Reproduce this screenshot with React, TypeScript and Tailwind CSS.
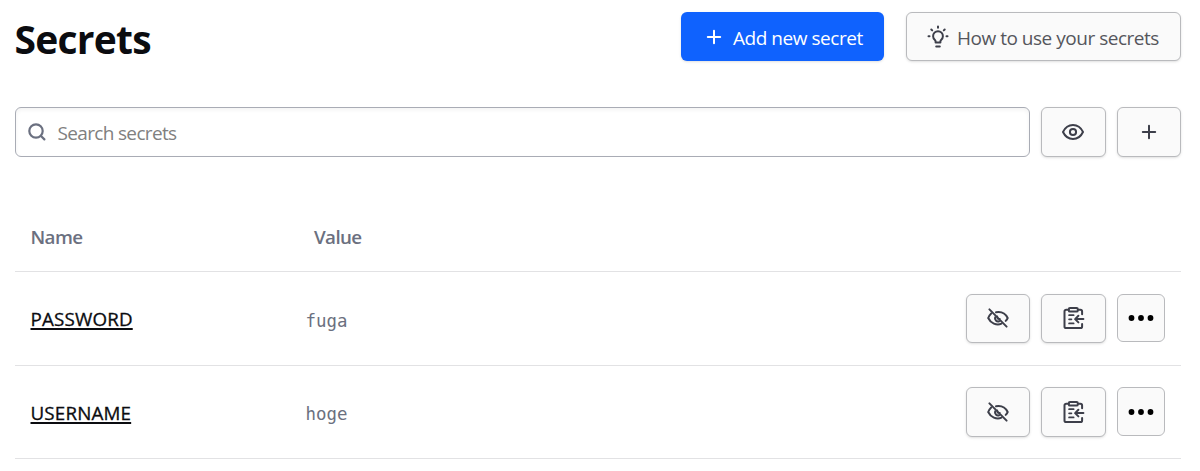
import type { ReactNode } from 'react';
import clsx from 'clsx';

interface Secret {
  name: string;
  value: string;
}

const secrets: Secret[] = [
  { name: 'PASSWORD', value: 'fuga' },
  { name: 'USERNAME', value: 'hoge' },
];

function Icon({ children, className }: { children: ReactNode; className?: string }) {
  return (
    <svg
      viewBox="0 0 24 24"
      fill="none"
      stroke="currentColor"
      strokeWidth="2"
      strokeLinecap="round"
      strokeLinejoin="round"
      className={clsx('h-6 w-6 shrink-0', className)}
    >
      {children}
    </svg>
  );
}

function PlusIcon({ className }: { className?: string }) {
  return (
    <Icon className={className}>
      <path d="M12 5.8v12.4M5.8 12h12.4" />
    </Icon>
  );
}

function SearchIcon() {
  return (
    <Icon className="text-[#6b7080]">
      <circle cx="11" cy="11" r="6.7" strokeWidth="2.2" />
      <path d="m16 16 3.4 3.4" strokeWidth="2.2" />
    </Icon>
  );
}

function BulbIcon() {
  return (
    <Icon>
      <path d="M9.6 17.6v-1.2c0-.7-.4-1.2-.9-1.7a4.9 4.9 0 1 1 6.6 0c-.5.5-.9 1-.9 1.7v1.2z" />
      <path d="M10.2 21.4h3.6M12 1.6v1.2M2.5 11.2h1M20.5 11.2h1M5.3 4.5l.9.9M18.7 4.5l-.9.9" />
    </Icon>
  );
}

function EyeIcon() {
  return (
    <Icon>
      <path d="M2 12c2-4.2 5.7-7 10-7s8 2.8 10 7c-2 4.2-5.7 7-10 7s-8-2.8-10-7z" />
      <circle cx="12" cy="12" r="3.1" />
    </Icon>
  );
}

function EyeOffIcon() {
  return (
    <Icon>
      <path d="m3.4 3.4 17.2 17.2" />
      <path d="M10 6.2c5-.9 9.5 1.3 11.7 5.8-.5 1.1-1.2 2.1-2 2.9" />
      <path d="M5.2 7.4C3.9 8.6 2.9 10.2 2.2 12c2.4 5.2 8.3 7.8 13.3 5.7" />
      <path d="M9.2 11.2a3.1 3.1 0 0 0 4 4" />
      <path d="M11.4 10.2v2.5h2.5" strokeWidth="1.5" />
    </Icon>
  );
}

function ClipboardIcon() {
  return (
    <Icon>
      <path d="M7.6 3.7H5.2a1.7 1.7 0 0 0-1.7 1.7v15a1.7 1.7 0 0 0 1.7 1.7h14.2a1.7 1.7 0 0 0 1.7-1.7v-2.5" />
      <path d="M16.9 3.7h2.5a1.7 1.7 0 0 1 1.7 1.7v2.8" />
      <rect x="7.8" y="2" width="9" height="3.6" rx="1.2" />
      <path d="M8.1 9.2h4.5M8.1 13.3h2.3M8.1 17.4h4.5" strokeWidth="1.8" />
      <path d="M22.4 13.1h-8.1M17.4 9.8l-3.3 3.3 3.3 3.3" />
    </Icon>
  );
}

function DotsIcon() {
  return (
    <svg viewBox="0 0 26 8" fill="currentColor" className="h-2 w-[26px] text-black">
      <circle cx="3.5" cy="4" r="2.9" />
      <circle cx="13" cy="4" r="2.9" />
      <circle cx="22.5" cy="4" r="2.9" />
    </svg>
  );
}

function IconButton({ label, className, children }: { label: string; className?: string; children: ReactNode }) {
  return (
    <button
      type="button"
      aria-label={label}
      className={clsx(
        'flex shrink-0 items-center justify-center rounded-md border border-[#b9babd] bg-[#fafafa] text-[#3d3f4a]',
        className ?? 'h-[49.5px] w-[64.5px] shadow-sm',
      )}
    >
      {children}
    </button>
  );
}

function SecretRow({ secret }: { secret: Secret }) {
  return (
    <div className="flex h-[93.7px] items-center border-b border-[#e2e2e4] pr-4 pl-4">
      <div className="w-[275px] pt-0.5">
        <a
          href="#"
          className="text-[18.8px] tracking-[0.16px] font-medium text-[#0b0c10] underline decoration-2 underline-offset-2 [-webkit-text-stroke:0.3px]"
        >
          {secret.name}
        </a>
      </div>
      <div className="flex-1 pt-[5px] font-['DejaVu_Sans_Mono',monospace] text-[17.4px] text-[#6b7080]">
        {secret.value}
      </div>
      <div className="flex items-start gap-[11px]">
        <IconButton label="Hide value">
          <EyeOffIcon />
        </IconButton>
        <IconButton label="Copy value">
          <ClipboardIcon />
        </IconButton>
        <IconButton label="More actions" className="h-[48.5px] w-[48.5px]">
          <DotsIcon />
        </IconButton>
      </div>
    </div>
  );
}

export default function App() {
  return (
    <div className="h-[471px] overflow-hidden bg-white pt-3 pr-[19px] pl-[14.5px] font-['Open_Sans','Noto_Sans',sans-serif]">
      <header className="flex h-[49px] items-center justify-between">
        <h1 className="pt-1 text-[39px] leading-none font-bold tracking-[-0.75px] text-[#0b0c10]">Secrets</h1>
        <div className="flex gap-[22px]">
          <button
            type="button"
            className="flex h-[49px] w-[203px] items-center rounded-md bg-[#0f62fe] pl-[21px] text-[19px] whitespace-nowrap text-white shadow-sm"
          >
            <PlusIcon className="mr-[7px]" />
            <span className="pt-[3px] tracking-[-0.46px]">Add new secret</span>
          </button>
          <button
            type="button"
            className="flex h-[49px] w-[275px] items-center rounded-md border border-[#b9babd] bg-[#fafafa] pl-[19px] text-[19px] whitespace-nowrap text-[#3d3f4a] shadow-sm"
          >
            <BulbIcon />
            <span className="pt-[3px] pl-[7px] tracking-[-0.48px] text-[#55565c]">How to use your secrets</span>
          </button>
        </div>
      </header>

      <div className="mt-[46px] flex gap-[11px]">
        <label className="flex h-[49.5px] flex-1 items-center rounded-md border-[1.5px] border-[#a9acb5] bg-white pl-[9px] inset-shadow-sm">
          <SearchIcon />
          <input
            type="text"
            placeholder="Search secrets"
            className="ml-[9px] flex-1 pt-[3px] text-[19px] tracking-[-0.66px] outline-none placeholder:text-[#808080]"
          />
        </label>
        <IconButton label="Show all values">
          <EyeIcon />
        </IconButton>
        <IconButton label="Add secret">
          <PlusIcon />
        </IconButton>
      </div>

      <section className="mt-[45.5px]">
        <div className="flex h-[70px] items-center border-b border-[#e2e2e4] pt-px pl-4 text-[18.8px] font-semibold text-[#6b7080]">
          <div className="w-[283.5px] tracking-[-0.6px]">Name</div>
          <div className="tracking-[-0.6px]">Value</div>
        </div>
        {secrets.map((secret) => (
          <SecretRow key={secret.name} secret={secret} />
        ))}
      </section>
    </div>
  );
}
